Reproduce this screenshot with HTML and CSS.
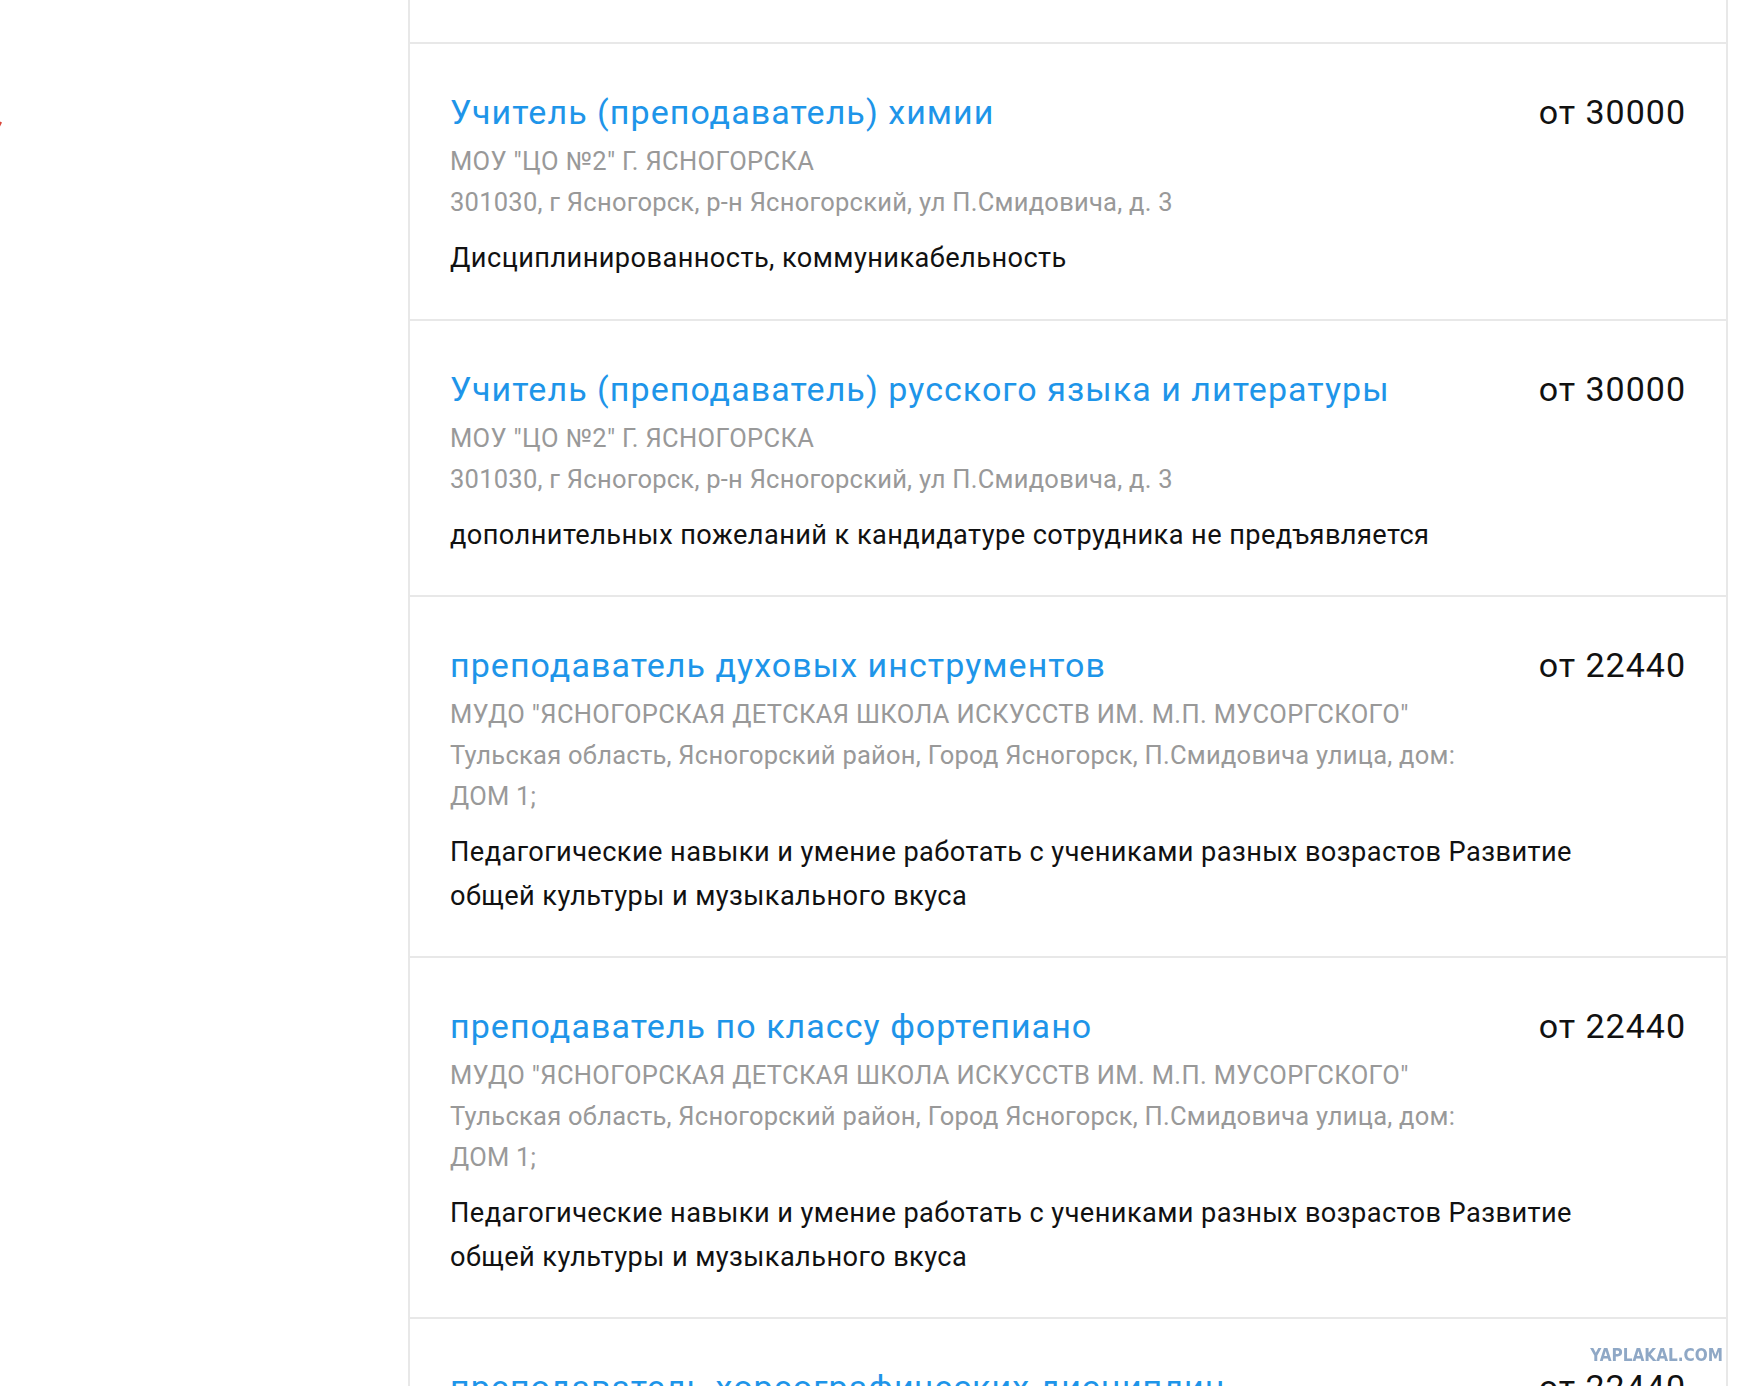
FILE: index.html
```html
<!DOCTYPE html>
<html lang="ru">
<head>
  <meta charset="UTF-8">
  <meta name="viewport" content="width=device-width, initial-scale=1.0">
  <title>Вакансии — Ясногорск</title>
  <link rel="stylesheet" href="styles.css">
</head>
<body>
  <div class="page">
    <aside class="sidebar">
      <svg class="sidebar-mark" width="6" height="10" viewBox="0 0 6 10">
        <path d="M0 9 L3 3" stroke="#d9463a" stroke-width="2.2" fill="none"/>
      </svg>
    </aside>

    <main class="vacancies">
      <div class="vacancy vacancy-tail"></div>

      <div class="vacancy">
        <div class="vacancy-head">
          <div class="vacancy-info">
            <a href="#" class="vacancy-title">Учитель (преподаватель) химии</a>
            <div class="vacancy-org">МОУ "ЦО №2" Г. ЯСНОГОРСКА</div>
            <div class="vacancy-address">301030, г Ясногорск, р-н Ясногорский, ул П.Смидовича, д. 3</div>
          </div>
          <div class="vacancy-salary">от 30000</div>
        </div>
        <p class="vacancy-req">Дисциплинированность, коммуникабельность</p>
      </div>

      <div class="vacancy">
        <div class="vacancy-head">
          <div class="vacancy-info">
            <a href="#" class="vacancy-title">Учитель (преподаватель) русского языка и литературы</a>
            <div class="vacancy-org">МОУ "ЦО №2" Г. ЯСНОГОРСКА</div>
            <div class="vacancy-address">301030, г Ясногорск, р-н Ясногорский, ул П.Смидовича, д. 3</div>
          </div>
          <div class="vacancy-salary">от 30000</div>
        </div>
        <p class="vacancy-req">дополнительных пожеланий к кандидатуре сотрудника не предъявляется</p>
      </div>

      <div class="vacancy">
        <div class="vacancy-head">
          <div class="vacancy-info">
            <a href="#" class="vacancy-title">преподаватель духовых инструментов</a>
            <div class="vacancy-org">МУДО "ЯСНОГОРСКАЯ ДЕТСКАЯ ШКОЛА ИСКУССТВ ИМ. М.П. МУСОРГСКОГО"</div>
            <div class="vacancy-address">Тульская область, Ясногорский район, Город Ясногорск, П.Смидовича улица, дом: ДОМ 1;</div>
          </div>
          <div class="vacancy-salary">от 22440</div>
        </div>
        <p class="vacancy-req">Педагогические навыки и умение работать с учениками разных возрастов Развитие общей культуры и музыкального вкуса</p>
      </div>

      <div class="vacancy">
        <div class="vacancy-head">
          <div class="vacancy-info">
            <a href="#" class="vacancy-title">преподаватель по классу фортепиано</a>
            <div class="vacancy-org">МУДО "ЯСНОГОРСКАЯ ДЕТСКАЯ ШКОЛА ИСКУССТВ ИМ. М.П. МУСОРГСКОГО"</div>
            <div class="vacancy-address">Тульская область, Ясногорский район, Город Ясногорск, П.Смидовича улица, дом: ДОМ 1;</div>
          </div>
          <div class="vacancy-salary">от 22440</div>
        </div>
        <p class="vacancy-req">Педагогические навыки и умение работать с учениками разных возрастов Развитие общей культуры и музыкального вкуса</p>
      </div>

      <div class="vacancy">
        <div class="vacancy-head">
          <div class="vacancy-info">
            <a href="#" class="vacancy-title">преподаватель хореографических дисциплин</a>
            <div class="vacancy-org">МУДО "ЯСНОГОРСКАЯ ДЕТСКАЯ ШКОЛА ИСКУССТВ ИМ. М.П. МУСОРГСКОГО"</div>
          </div>
          <div class="vacancy-salary">от 22440</div>
        </div>
      </div>
    </main>
  </div>

  <div class="watermark">YAPLAKAL.COM</div>
</body>
</html>
```

FILE: styles.css
```css
body {
  font-family: Roboto, "Noto Sans", sans-serif;
  margin: 0;
  padding: 0;
  background: #fff;
  color: #111;
}
.page {
  display: flex;
  align-items: flex-start;
  padding-right: 20px;
}
.sidebar {
  width: 408px;
  flex-shrink: 0;
  padding-top: 119px;
}
.sidebar-mark {
  display: block;
  margin-left: -2px;
}
.vacancies {
  width: 1316px;
  border-left: 2px solid #e8e8e8;
  border-right: 2px solid #e8e8e8;
}
.vacancy {
  padding: 40px 40px 38px 40px;
  border-bottom: 2px solid #e8e8e8;
}
.vacancy-tail {
  height: 42px;
  padding: 0;
}
.vacancy-head {
  display: flex;
  align-items: flex-start;
}
.vacancy-info {
  flex: 1;
  min-width: 0;
}
.vacancy-title {
  display: block;
  font-size: 34px;
  line-height: 57px;
  letter-spacing: 1.05px;
  color: #1e95e9;
  text-decoration: none;
}
.vacancy-org,
.vacancy-address {
  font-size: 25.5px;
  line-height: 41px;
  color: #999;
}
.vacancy-org {
  letter-spacing: 0.35px;
}
.vacancy-address {
  letter-spacing: 0.25px;
}
.vacancy-salary {
  width: 200px;
  flex-shrink: 0;
  text-align: right;
  font-size: 34px;
  line-height: 57px;
  letter-spacing: 1px;
  color: #111;
}
.vacancy-req {
  margin: 14px 0 0;
  max-width: 1160px;
  font-size: 27.2px;
  line-height: 43.5px;
  letter-spacing: 0.42px;
  color: #111;
}
.watermark {
  position: fixed;
  right: 25px;
  bottom: 21px;
  font-family: "DejaVu Sans Condensed", "DejaVu Sans", sans-serif;
  font-weight: bold;
  font-size: 17px;
  letter-spacing: 0;
  color: #8fa8c6;
}
```
